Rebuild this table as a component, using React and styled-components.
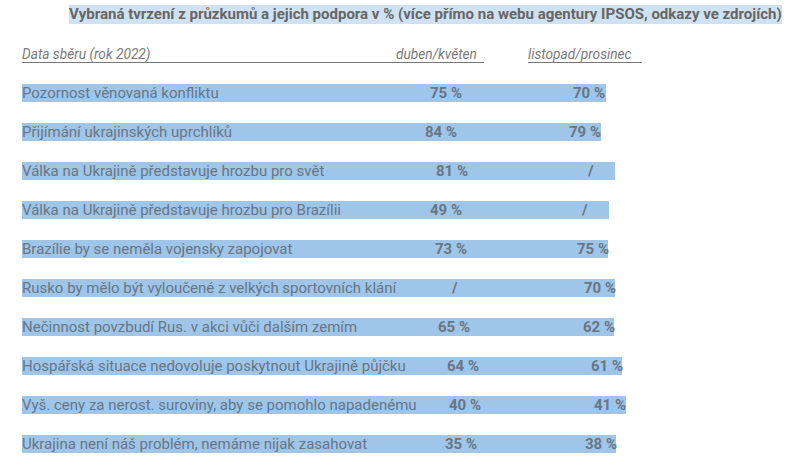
import React from "react";
import styled, { createGlobalStyle } from "styled-components";

const LEFT = 22;

const rows = [
  { label: "Pozornost věnovaná konfliktu", a: "75 %", b: "70 %", ax: 430, bx: 573, end: 606 },
  { label: "Přijímání ukrajinských uprchlíků", a: "84 %", b: "79 %", ax: 425, bx: 569, end: 601 },
  { label: "Válka na Ukrajině představuje hrozbu pro svět", a: "81 %", b: "/", ax: 436, bx: 588, end: 615 },
  { label: "Válka na Ukrajině představuje hrozbu pro Brazílii", a: "49 %", b: "/", ax: 430, bx: 582, end: 609 },
  { label: "Brazílie by se neměla vojensky zapojovat", a: "73 %", b: "75 %", ax: 435, bx: 577, end: 608 },
  { label: "Rusko by mělo být vyloučené z velkých sportovních klání", a: "/", b: "70 %", ax: 452, bx: 584, end: 615 },
  { label: "Nečinnost povzbudí Rus. v akci vůči dalším zemím", a: "65 %", b: "62 %", ax: 438, bx: 583, end: 614 },
  { label: "Hospářská situace nedovoluje poskytnout Ukrajině půjčku", a: "64 %", b: "61 %", ax: 447, bx: 591, end: 622 },
  { label: "Vyš. ceny za nerost. suroviny, aby se pomohlo napadenému", a: "40 %", b: "41 %", ax: 449, bx: 594, end: 626 },
  { label: "Ukrajina není náš problém, nemáme nijak zasahovat", a: "35 %", b: "38 %", ax: 445, bx: 585, end: 616 },
];

const GlobalStyle = createGlobalStyle`
  body {
    margin: 0;
    background: #ffffff;
    font-family: Roboto, "Liberation Sans", sans-serif;
    color: #666666;
  }
`;

const Page = styled.div`
  width: 792px;
  height: 466px;
  overflow: hidden;
  padding: 5px 0 0 ${LEFT}px;
  box-sizing: border-box;
  display: flex;
  flex-direction: column;
`;

const TitleLine = styled.div`
  display: flex;
  padding-left: ${69 - LEFT}px;
`;

const Title = styled.span`
  background: #cfe2f3;
  font-size: 15px;
  font-weight: 700;
  line-height: 19px;
  white-space: nowrap;
  color: #666666;
`;

const HeaderLine = styled.div`
  display: flex;
  margin-top: 22px;
  font-style: italic;
  font-size: 13.7px;
  line-height: 16px;
  color: #7a7a7a;
`;

const HeaderCell = styled.span`
  width: ${(p) => p.$w}px;
  margin-left: ${(p) => p.$gap || 0}px;
  border-bottom: 1px solid #777777;
  white-space: nowrap;
`;

const List = styled.div`
  display: flex;
  flex-direction: column;
  gap: 21px;
  margin-top: 21px;
`;

const Bar = styled.div`
  display: flex;
  align-self: flex-start;
  height: 18px;
  align-items: center;
  background: #9fc5e8;
  font-size: 15px;
  white-space: nowrap;
  color: #687685;
`;

const Label = styled.span`
  width: ${(p) => p.$w}px;
`;

const Value = styled.span`
  width: ${(p) => p.$w}px;
  font-weight: 700;
`;

export default function App() {
  return (
    <>
      <GlobalStyle />
      <Page>
        <TitleLine>
          <Title>
            Vybraná tvrzení z průzkumů a jejich podpora v % (více přímo na webu agentury IPSOS, odkazy ve zdrojích)
          </Title>
        </TitleLine>
        <HeaderLine>
          <HeaderCell $w={396 - LEFT}>Data sběru (rok 2022)</HeaderCell>
          <HeaderCell $w={88}>duben/květen</HeaderCell>
          <HeaderCell $w={114} $gap={44}>listopad/prosinec</HeaderCell>
        </HeaderLine>
        <List>
          {rows.map((r) => (
            <Bar key={r.label}>
              <Label $w={r.ax - LEFT}>{r.label}</Label>
              <Value $w={r.bx - r.ax}>{r.a}</Value>
              <Value $w={r.end - r.bx}>{r.b}</Value>
            </Bar>
          ))}
        </List>
      </Page>
    </>
  );
}
